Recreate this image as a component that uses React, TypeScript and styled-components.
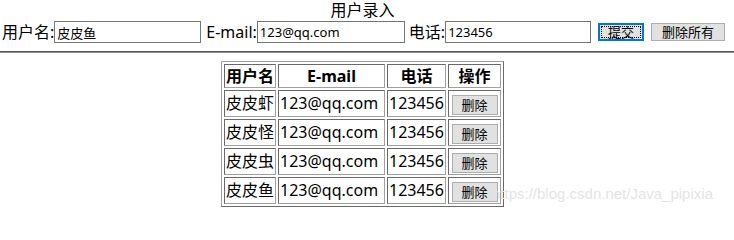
import React from 'react';
import styled, { createGlobalStyle } from 'styled-components';

const GlobalStyle = createGlobalStyle`
  html, body {
    margin: 0;
    padding: 0;
    background: #fff;
  }
  body {
    font-family: "Noto Sans", "Noto Sans CJK SC", sans-serif;
    font-size: 16px;
    color: #000;
  }
`;

type User = { name: string; email: string; phone: string };

const users: User[] = [
  { name: '皮皮虾', email: '123@qq.com', phone: '123456' },
  { name: '皮皮怪', email: '123@qq.com', phone: '123456' },
  { name: '皮皮虫', email: '123@qq.com', phone: '123456' },
  { name: '皮皮鱼', email: '123@qq.com', phone: '123456' },
];

const App: React.FC = () => {
  return (
    <Page>
      <GlobalStyle />
      <Title>用户录入</Title>
      <FormRow>
        <Label>用户名:</Label>
        <TextInput $width={147} defaultValue="皮皮鱼" />
        <Label $gap={5}>E-mail:</Label>
        <TextInput $width={148} defaultValue="123@qq.com" />
        <Label $gap={4}>电话:</Label>
        <TextInput $width={146} defaultValue="123456" />
        <Button $width={46} $focused>提交</Button>
        <Button $width={74}>删除所有</Button>
      </FormRow>
      <Divider />
      <Table>
        <thead>
          <tr>
            <HeadCell $width={48}>用户名</HeadCell>
            <HeadCell $width={103}>E-mail</HeadCell>
            <HeadCell $width={55}>电话</HeadCell>
            <HeadCell $width={49}>操作</HeadCell>
          </tr>
        </thead>
        <tbody>
          {users.map((u) => (
            <tr key={u.name}>
              <Cell>{u.name}</Cell>
              <Cell>{u.email}</Cell>
              <Cell>{u.phone}</Cell>
              <Cell $center>
                <DeleteButton>删除</DeleteButton>
              </Cell>
            </tr>
          ))}
        </tbody>
      </Table>
      <Watermark>https://blog.csdn.net/Java_pipixia</Watermark>
    </Page>
  );
};

const Page = styled.div`
  position: relative;
  width: 725px;
  height: 216px;
`;

const Title = styled.div`
  text-align: center;
  line-height: 20px;
  height: 20px;
`;

const FormRow = styled.div`
  display: flex;
  align-items: center;
  height: 24px;
  padding-left: 2px;
`;

const Label = styled.span<{ $gap?: number }>`
  margin-left: ${(p) => p.$gap ?? 0}px;
  line-height: 22px;
  white-space: nowrap;
`;

const TextInput = styled.input<{ $width: number }>`
  box-sizing: border-box;
  width: ${(p) => p.$width}px;
  height: 22px;
  margin: 0;
  padding: 1px 2px;
  border: 1px solid #767676;
  border-radius: 0;
  font-family: "Noto Sans", "Noto Sans CJK SC", sans-serif;
  font-size: 13px;
  color: #000;
  background: #fff;
  outline: none;
`;

const Button = styled.button<{ $width: number; $focused?: boolean }>`
  box-sizing: border-box;
  width: ${(p) => p.$width}px;
  height: 18px;
  margin: 0 0 0 7px;
  padding: 0;
  border: ${(p) => (p.$focused ? '2px solid #0078d7' : '1px solid #adadad')};
  border-radius: 0;
  background: #e1e1e1;
  font-family: "Noto Sans", "Noto Sans CJK SC", sans-serif;
  font-size: 13px;
  line-height: 14px;
  color: #000;
  outline: ${(p) => (p.$focused ? '1px dotted #000' : 'none')};
  outline-offset: -4px;
`;

const Divider = styled.hr`
  width: 734px;
  margin: 7px 0 0 0;
  height: 0;
  border: none;
  border-top: 1px solid #5a5a5a;
  border-bottom: 1px solid #8c8c8c;
`;

const Table = styled.table`
  margin: 8px auto 0;
  border-collapse: separate;
  border-spacing: 2px;
  border: 1px solid;
  border-color: #a0a0a0 #696969 #696969 #a0a0a0;
`;

const HeadCell = styled.th<{ $width: number }>`
  box-sizing: content-box;
  width: ${(p) => p.$width}px;
  min-width: ${(p) => p.$width}px;
  height: 20px;
  padding: 1px;
  border: 1px solid;
  border-color: #696969 #a0a0a0 #a0a0a0 #696969;
  font-weight: bold;
  font-size: 16px;
  line-height: 20px;
  text-align: center;
  white-space: nowrap;
`;

const Cell = styled.td<{ $center?: boolean }>`
  height: 23px;
  padding: 1px;
  border: 1px solid;
  border-color: #696969 #a0a0a0 #a0a0a0 #696969;
  font-size: 16px;
  line-height: 23px;
  text-align: ${(p) => (p.$center ? 'center' : 'left')};
  white-space: nowrap;
`;

const DeleteButton = styled.button`
  box-sizing: border-box;
  width: 46px;
  height: 20px;
  margin: 0;
  padding: 0;
  border: 1px solid #adadad;
  border-radius: 0;
  background: #e1e1e1;
  font-family: "Noto Sans", "Noto Sans CJK SC", sans-serif;
  font-size: 13px;
  line-height: 16px;
  color: #000;
  vertical-align: middle;
`;

const Watermark = styled.div`
  position: absolute;
  left: 492px;
  top: 185px;
  font-family: "Liberation Sans", Arial, sans-serif;
  font-size: 15px;
  line-height: 18px;
  color: #e4e4e4;
  white-space: nowrap;
  pointer-events: none;
`;

export default App;
